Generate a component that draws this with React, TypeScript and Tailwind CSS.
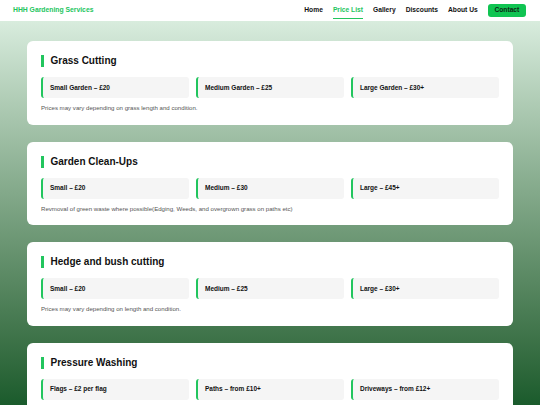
type Service = {
  title: string;
  items: string[];
  note?: string;
};

const services: Service[] = [
  {
    title: "Grass Cutting",
    items: ["Small Garden – £20", "Medium Garden – £25", "Large Garden – £30+"],
    note: "Prices may vary depending on grass length and condition.",
  },
  {
    title: "Garden Clean-Ups",
    items: ["Small – £20", "Medium – £30", "Large – £45+"],
    note: "Revmoval of green waste where possible(Edging, Weeds, and overgrown grass on paths etc)",
  },
  {
    title: "Hedge and bush cutting",
    items: ["Small – £20", "Medium – £25", "Large – £30+"],
    note: "Prices may vary depending on length and condition.",
  },
  {
    title: "Pressure Washing",
    items: ["Flags – £2 per flag", "Paths – from £10+", "Driveways – from £12+"],
    note: "Prices may vary depending on size and condition.",
  },
];

const navLinks = ["Home", "Price List", "Gallery", "Discounts", "About Us"];

function Header() {
  return (
    <header className="h-[21px] shrink-0 bg-white flex items-center justify-between pl-[13px] pr-[14px]">
      <a className="text-[6.8px] font-bold text-[#22c55e]">HHH Gardening Services</a>
      <nav className="flex items-center gap-[10px] text-[6.7px] font-bold text-[#111]">
        {navLinks.map((link) =>
          link === "Price List" ? (
            <a key={link} className="text-[#22c55e] border-b border-[#22c55e] pb-[2px] mt-[3px]">
              {link}
            </a>
          ) : (
            <a key={link}>{link}</a>
          )
        )}
        <a className="bg-[#10c452] text-[#0d2614] rounded-[3px] h-[13.5px] px-[6.7px] flex items-center">
          Contact
        </a>
      </nav>
    </header>
  );
}

function ServiceCard({ data }: { data: Service }) {
  return (
    <section className="bg-white rounded-[6px] px-[14px] pt-[14px] pb-[13.5px] shrink-0">
      <div className="flex items-center gap-[7px] h-[12px]">
        <span className="w-[2.5px] h-[12px] bg-[#22c55e]" />
        <h2 className="text-[10px] font-bold text-[#111] leading-none">{data.title}</h2>
      </div>
      <div className="grid grid-cols-3 gap-[7px] mt-[10px]">
        {data.items.map((item, i) => (
          <div
            key={i}
            className="h-[21px] bg-[#f5f5f5] border-l-2 border-[#22c55e] rounded-[3px] pl-[7px] flex items-center text-[6.5px] font-bold text-[#111]"
          >
            {item}
          </div>
        ))}
      </div>
      {data.note && (
        <p className="text-[6.1px] text-[#555] mt-[6px] leading-[7px]">{data.note}</p>
      )}
    </section>
  );
}

export default function App() {
  return (
    <div
      className="h-screen flex flex-col overflow-hidden"
      style={{ fontFamily: '"Liberation Sans", Arial, sans-serif' }}
    >
      <Header />
      <main className="flex-1 min-h-0 overflow-hidden bg-gradient-to-b from-[#d8ecdd] to-[#1a5b2c] px-[27px] pt-[20px] flex flex-col gap-[17px]">
        {services.map((s, i) => (
          <ServiceCard data={s} key={i} />
        ))}
      </main>
    </div>
  );
}
